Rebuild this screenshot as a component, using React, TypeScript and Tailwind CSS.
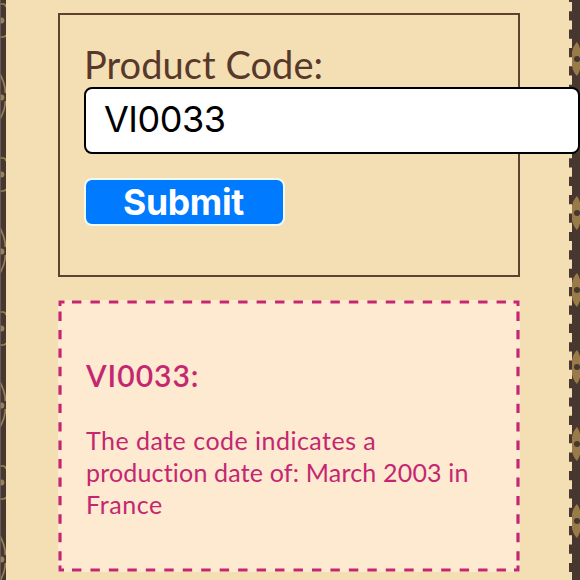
import { useState } from "react"

const flowers = [-18, 59, 136, 213, 290, 367, 444, 521]

function LeftCanvas() {
  return (
    <svg className="h-full w-1.5 shrink-0 bg-[#48372f]" viewBox="0 0 6 580" aria-hidden="true">
      {[20, 174, 328, 482].map((y) => (
        <g key={y} fill="none" stroke="#988158" strokeWidth="1.7">
          <path d={`M0 ${y - 16}H3Q5.5 ${y - 16} 6 ${y - 13}M0 ${y + 17}H3Q5.5 ${y + 17} 6 ${y + 15}`} />
          <circle cx="1.4" cy={y + 0.5} r="3" fill="#988158" stroke="none" />
        </g>
      ))}
      {[97, 251, 405, 559].map((y) => (
        <g key={y} fill="none" stroke="#988158" strokeWidth="1.7">
          <path d={`M0 ${y - 23}C3 ${y - 17} 5.6 ${y - 12} 5.3 ${y - 4}M0 ${y + 22}C3 ${y + 16} 5.6 ${y + 12} 5.3 ${y + 4}`} />
          <circle cx="1.4" cy={y + 0.5} r="3" fill="#988158" stroke="none" />
        </g>
      ))}
      <rect width="1" height="580" fill="#696166" fillOpacity="0.8" />
    </svg>
  )
}

function RightCanvas() {
  return (
    <svg className="h-full w-[11px] shrink-0 bg-[#48372f]" viewBox="0 0 11 580" aria-hidden="true">
      {flowers.map((y) => (
        <g key={y}>
          <path d={`M8 ${y - 17}Q12 ${y - 12} 12 ${y}Q12 ${y + 12} 8 ${y + 17}Q4 ${y + 13} 3 ${y + 7}V${y - 7}Q4 ${y - 13} 8 ${y - 17}Z`} fill="#987b49" />
          <ellipse cx="8" cy={y} rx="3" ry="3" fill="#48372f" />
        </g>
      ))}
      {/* stitched edge */}
      <path d="M1.5 2V580" stroke="#f4deb3" strokeWidth="3" strokeDasharray="9.2 9.19" />
    </svg>
  )
}

function Stitching() {
  return (
    <svg className="absolute inset-0 h-full w-full" viewBox="0 0 462 272" fill="none" stroke="#c42770" aria-hidden="true">
      <path d="M14 2H448M14 270H448" strokeWidth="3" strokeDasharray="9.4 9.06" />
      <path d="M2 11.5V261M460 11.5V261" strokeWidth="3.2" strokeDasharray="9.4 9.04" />
      <path d="M2 6V2H6.5M455.5 2H460V6M460 265.5V270H456M6 270H2V265.5" strokeWidth="3" />
    </svg>
  )
}

export default function App() {
  const [code, setCode] = useState("VI0033")

  return (
    <div className="flex h-[580px] w-[580px] overflow-hidden bg-[#f4deb3]">
      <LeftCanvas />
      <main className="flex min-w-0 flex-1 flex-col pt-[13px] pr-[49px] pl-[52px]">
        {/* Lookup form */}
        <form onSubmit={(e) => e.preventDefault()} className="relative z-10 h-[264px] shrink-0 border-2 border-[#60402f] pt-[26px] pl-[24px]">
          <label htmlFor="code" className="block h-[46px] font-['Lato',sans-serif] text-[38px] leading-[46px] tracking-[0.05px] text-[#57392b]">
            Product Code:
          </label>
          <input
            id="code"
            value={code}
            onChange={(e) => setCode(e.target.value)}
            className="block h-[67px] w-[496px] rounded-lg border-2 border-black bg-white px-[18px] pb-1 font-['Inter',sans-serif] text-[36px] tracking-[-0.5px] text-black outline-none"
          />
          <button className="mt-[24px] block h-[48px] w-[201px] rounded-lg border-2 border-[#f0faf4] bg-[#007aff] pt-0.5 pr-0.5 font-['Inter',sans-serif] text-[35.5px] leading-none font-bold tracking-[-0.3px] text-white">
            Submit
          </button>
        </form>

        {/* Decoded result */}
        <section className="relative mt-[23px] flex h-[272px] shrink-0 flex-col bg-[#fee9d1] pt-[57px] pl-[28px] font-['Lato',sans-serif] text-[#c42770] [font-variant-ligatures:none]">
          <Stitching />
          <h2 className="text-[30px] leading-[36px] font-semibold tracking-[1px]">VI0033:</h2>
          <p className="mt-[31px] w-[410px] text-[25px] leading-[32px]">
            <span className="tracking-[0.48px]">The date code indicates a </span>
            <span className="tracking-[0.18px]">production date of: March 2003 in </span>
            <span className="tracking-[0.6px]">France</span>
          </p>
        </section>
      </main>
      <RightCanvas />
    </div>
  )
}
